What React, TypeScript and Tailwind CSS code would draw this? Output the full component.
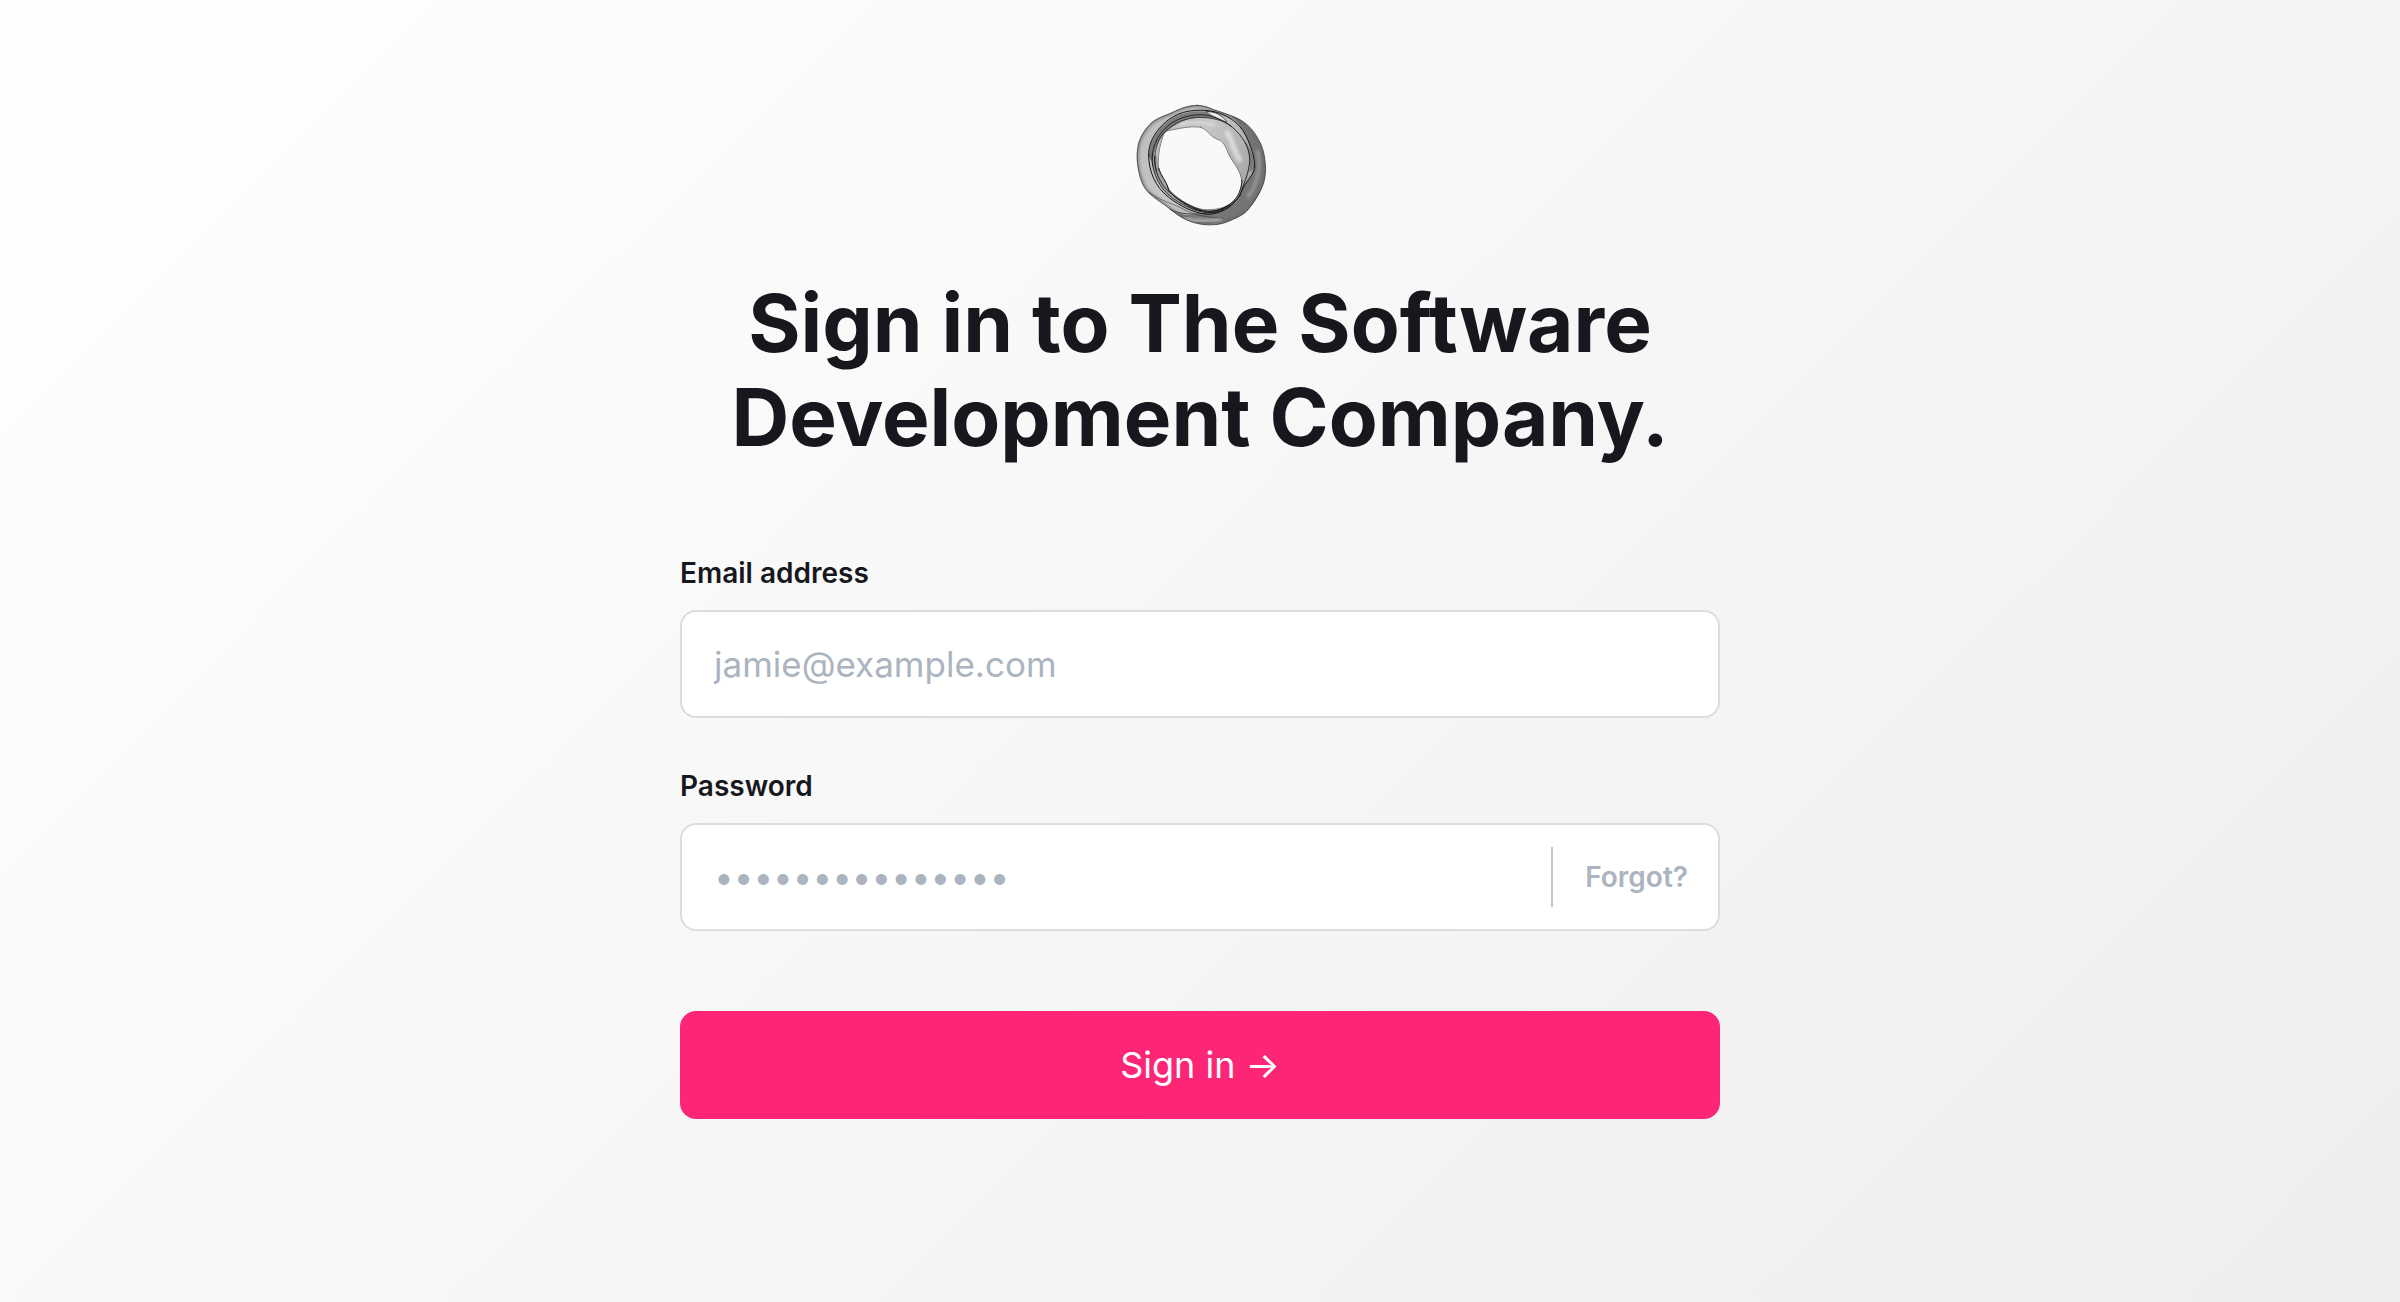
const OUTER =
  "M232 46C205 46 180 56 158 67C134 78 108 84 90 103C70 124 56 148 53 176C50 197 51 215 55 237C60 264 66 286 84 306C104 327 132 341 154 360C184 386 220 402 258 404C285 406 308 402 330 392C350 383 370 376 385 358C398 342 410 325 420 305C433 280 438 255 436 225C434 195 429 172 415 148C400 120 380 98 350 84C325 73 302 66 278 58C262 50 248 47 232 46Z";
const HOLE =
  "M243 112C262 118 270 140 292 148C310 153 317 170 324 188C335 215 357 232 364 265C369 300 355 325 325 345C305 358 265 362 240 357C205 347 168 322 148 300C138 275 118 258 116 235C112 205 118 170 130 135C137 121 145 122 160 119C190 113 215 108 243 112Z";

function RingLogo() {
  return (
    <svg viewBox="0 0 480 450" className="h-[150px] w-[160px]" role="img" aria-label="The Software Development Company">
      <defs>
        <linearGradient id="base" x1="0" y1="0.2" x2="1" y2="0.7">
          <stop offset="0" stopColor="#bebebe" />
          <stop offset="0.45" stopColor="#c6c6c6" />
          <stop offset="1" stopColor="#9c9c9c" />
        </linearGradient>
        <linearGradient id="side" x1="0" y1="0" x2="0.7" y2="1">
          <stop offset="0" stopColor="#5a5a5a" stopOpacity="0.75" />
          <stop offset="1" stopColor="#6a6a6a" stopOpacity="0.8" />
        </linearGradient>
        <clipPath id="ring">
          <path clipRule="evenodd" d={`${OUTER}${HOLE}`} />
        </clipPath>
        <filter id="soft" x="-20%" y="-20%" width="140%" height="140%">
          <feGaussianBlur stdDeviation="5" />
        </filter>
      </defs>
      <path d={`${OUTER}${HOLE}`} fill="url(#base)" fillRule="evenodd" />
      <g clipPath="url(#ring)">
        {/* shaded rims and the thick right side */}
        <path d={OUTER} fill="none" stroke="#555" strokeOpacity="0.6" strokeWidth="10" filter="url(#soft)" />
        <path
          d="M275 57C340 62 372 120 388 160C402 196 406 215 404 236C396 262 378 275 368 294C364 322 346 342 318 354C290 368 265 374 235 374C200 378 175 372 150 360C190 402 260 412 330 392C400 372 440 290 436 225C430 140 370 70 275 57Z"
          fill="url(#side)"
        />
        <path d="M412 180C424 225 416 280 382 322" fill="none" stroke="#bbb" strokeOpacity="0.5" strokeWidth="10" filter="url(#soft)" />
        <path d="M190 385C230 395 270 395 305 386" fill="none" stroke="#ccc" strokeOpacity="0.6" strokeWidth="12" filter="url(#soft)" />
        {/* dark fold at the upper left */}
        <path
          d="M87 200C86 150 120 104 165 80C205 60 262 58 300 76L322 98C285 84 240 78 205 88C160 102 122 132 108 172C102 190 98 205 100 225Z"
          fill="#333"
          fillOpacity="0.5"
        />
        <path d="M92 185C90 235 110 285 150 318C185 344 220 362 262 368L240 356C205 347 168 322 148 300C128 270 112 250 112 200Z" fill="#555" fillOpacity="0.3" />
        {/* sheen on the inner veil */}
        <path d="M318 125C338 145 335 175 362 215" fill="none" stroke="#e4e4e4" strokeWidth="16" strokeOpacity="0.8" filter="url(#soft)" />
        <path d="M180 104C210 94 250 94 285 108" fill="none" stroke="#e0e0e0" strokeWidth="12" strokeOpacity="0.6" filter="url(#soft)" />
        <path d="M372 150C388 185 394 215 388 245C400 240 404 236 404 230C400 195 390 170 372 150Z" fill="#444" fillOpacity="0.45" />
      </g>
      <path d="M262 66C285 64 307 77 320 95C300 88 280 79 262 66Z" fill="#eeeeee" />
      <path d="M278 360C315 356 340 340 362 315C352 342 320 362 278 360Z" fill="#c8c8c8" />
      {/* contour strands */}
      <g fill="none" stroke="#111" strokeWidth="2.5" strokeLinecap="round" strokeLinejoin="round">
        <path d={OUTER} stroke="#3c3c3c" strokeWidth="2.5" />
        <path d={HOLE} stroke="#555" strokeWidth="2" />
        <path
          d="M86 195C84 150 120 103 160 80C197 58 250 56 290 67C330 79 358 100 376 134C392 166 406 204 404 236C396 262 376 276 366 300C356 338 310 372 262 373C220 369 180 348 146 322C106 290 86 245 86 195Z"
          strokeWidth="3"
        />
        <path d="M98 225C90 175 115 125 157 98C192 76 240 68 276 79C312 90 345 112 368 146C384 170 392 196 388 225C384 256 370 282 364 305C352 336 324 356 290 366C250 374 212 358 172 334C130 310 106 270 98 225Z" />
        <path d="M110 245C98 200 107 155 134 126C162 98 197 84 235 82C275 82 310 90 335 110" strokeWidth="2" />
        <path d="M104 200C100 240 122 286 150 308C180 334 215 352 250 362C285 370 318 354 338 336C354 320 364 300 366 270" />
        <path d="M116 235C122 258 140 272 146 300C162 322 194 344 228 358C250 366 290 370 325 346" strokeWidth="3" />
        <path d="M88 308C125 335 160 340 195 360C225 376 270 384 310 384" strokeWidth="2" strokeOpacity="0.65" />
        <path d="M150 358C180 374 220 374 262 370C300 366 340 345 362 316" strokeWidth="2" />
        <path d="M258 65C285 62 307 77 320 95" strokeWidth="2" />
      </g>
    </svg>
  );
}

const fieldBox =
  "h-[108px] w-full rounded-2xl border-2 border-[#dddddd] bg-white text-[35px] text-[#16181d] placeholder:text-[#abb4bf] outline-none focus:border-[#fd2576]";

export default function App() {
  return (
    <main className="min-h-screen bg-[linear-gradient(135deg,#ffffff,#eeeeee)] px-8 pt-[90px] pb-20 font-['Inter',sans-serif] text-[#16181d]">
      <div className="mx-auto flex w-full max-w-[1040px] flex-col">
        <header className="flex flex-col items-center gap-9 text-center">
          <RingLogo />
          <h1 className="text-[80px] leading-[94px] font-bold">
            Sign in to The Software
            <br />
            Development Company.
          </h1>
        </header>

        <form className="mt-[89px] flex flex-col" onSubmit={(e) => e.preventDefault()}>
          <div className="flex flex-col gap-4">
            <label htmlFor="email" className="text-[28px] leading-[41px] font-semibold">
              Email address
            </label>
            <input id="email" type="email" placeholder="jamie@example.com" className={`${fieldBox} px-8`} />
          </div>

          <div className="mt-12 flex flex-col gap-4">
            <label htmlFor="password" className="text-[28px] leading-[41px] font-semibold">
              Password
            </label>
            <div className="relative">
              <input id="password" type="password" placeholder="•••••••••••••••" className={`${fieldBox} pr-48 pl-8`} />
              <div className="absolute inset-y-6 right-8 flex items-center border-l-2 border-[#c4c4c4] pl-8">
                <a href="#forgot" className="text-[28px] leading-10 font-semibold text-[#abb4bf]">
                  Forgot?
                </a>
              </div>
            </div>
          </div>

          <button type="submit" className="mt-20 h-[108px] rounded-2xl bg-[#fd2576] text-4xl text-white">
            Sign in →
          </button>
        </form>
      </div>
    </main>
  );
}
